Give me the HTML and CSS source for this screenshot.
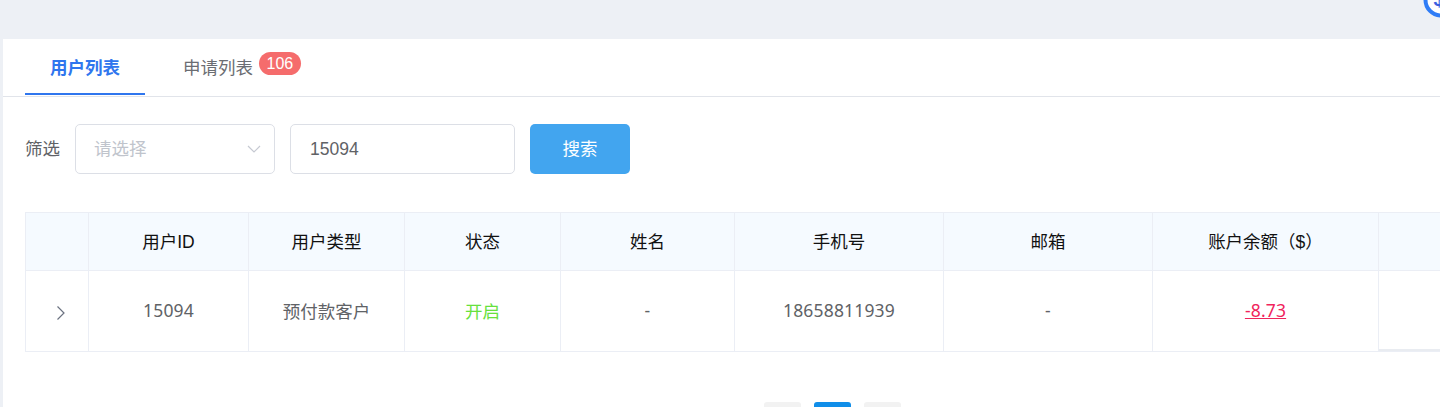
FILE: index.html
```html
<!DOCTYPE html>
<html lang="zh-CN">
<head>
<meta charset="utf-8">
<title>用户列表</title>
<link rel="stylesheet" href="styles.css">
</head>
<body>
<header class="topbar">
  <svg class="coin" width="36" height="36" viewBox="0 0 36 36" aria-hidden="true"><circle cx="18" cy="18" r="15.5" fill="#fff" stroke="#2f7cf6" stroke-width="4"/><text x="16" y="24" text-anchor="middle" class="coin-text">$</text></svg>
</header>
<main class="card">
  <nav class="tabs">
    <a class="tab tab-active">用户列表</a>
    <a class="tab">申请列表<span class="badge">106</span></a>
  </nav>
  <form class="filters">
    <label class="filter-label">筛选</label>
    <div class="select">
      <span class="placeholder">请选择</span>
      <svg class="chevron" width="14" height="8" viewBox="0 0 14 8" aria-hidden="true"><path d="M1 1l6 6 6-6" fill="none" stroke="#c6c9d2" stroke-width="1.2"/></svg>
    </div>
    <div class="input">15094</div>
    <button class="search" type="button">搜索</button>
  </form>
  <div class="table-wrap">
    <table class="grid">
      <colgroup>
        <col class="c-expand"><col class="c-id"><col class="c-type"><col class="c-status"><col class="c-name"><col class="c-phone"><col class="c-mail"><col class="c-balance"><col class="c-action">
      </colgroup>
      <thead>
        <tr><th></th><th>用户ID</th><th>用户类型</th><th>状态</th><th>姓名</th><th>手机号</th><th>邮箱</th><th>账户余额（$）</th><th class="fixed-head"></th></tr>
      </thead>
      <tbody>
        <tr>
          <td><svg class="expand" width="10" height="16" viewBox="0 0 10 16" aria-hidden="true"><path d="M1.500 1.500L8 8l-6.500 6.500" fill="none" stroke="#6b7280" stroke-width="1.200"/></svg></td>
          <td class="num">15094</td><td>预付款客户</td><td class="on">开启</td><td class="num">-</td><td class="num">18658811939</td><td class="num">-</td><td class="num"><a class="debt">-8.73</a></td><td class="fixed-cell"></td>
        </tr>
      </tbody>
    </table>
  </div>
  <div class="pager">
    <span class="page"></span><span class="page page-current"></span><span class="page"></span>
  </div>
</main>
</body>
</html>
```
FILE: styles.css
```css
* { box-sizing: border-box; }
html, body { margin: 0; height: 407px; overflow: hidden; }
body {
  background: #edf0f5;
  color: #606266;
  font-family: "Liberation Sans", "Noto Sans CJK SC", sans-serif;
  font-size: 17.5px;
  position: relative;
}
.topbar { height: 39px; }
.coin { position: absolute; right: -19px; top: -18px; }
.coin-text { font: bold 20px "Liberation Sans", sans-serif; fill: #3a5fe0; }
.card { margin-left: 3px; height: 368px; background: #fff; overflow: hidden; }
.tabs { display: flex; height: 58px; padding-left: 22px; border-bottom: 1px solid #e1e4ea; }
.tab {
  width: 120px; height: 56px; line-height: 58px; text-align: center;
  color: #6b6d72; position: relative; margin-right: 13px;
  border-bottom: 2px solid transparent;
}
.tab-active { color: #2f76ee; font-weight: 700; border-bottom-color: #2f76ee; }
.badge {
  position: absolute; left: 101px; top: 13px;
  height: 23px; line-height: 23px; padding: 0 7.5px;
  background: #f56c6c; color: #fff; border-radius: 12px; font-size: 16px; font-weight: 400;
}
.filters { display: flex; align-items: center; gap: 15px; padding: 27px 0 0 22px; height: 77px; }
.filter-label { width: 35px; color: #606266; line-height: 52px; }
.select, .input {
  height: 50px; border: 1px solid #dcdfe6; border-radius: 5px; background: #fff;
  display: flex; align-items: center;
}
.select { width: 200px; padding: 0 13px 0 19px; justify-content: space-between; }
.placeholder { color: #c0c4cc; padding-bottom: 3px; margin-left: -1px; }
.input { width: 225px; padding: 0 19px; color: #606266; }
.search {
  width: 100px; height: 50px; border: 0; border-radius: 5px; padding: 0 0 3px;
  background: #42a5ef; color: #fff; font: inherit;
}
.table-wrap { margin: 38px 0 0 22px; overflow: hidden; }
.grid { width: 1560px; table-layout: fixed; border-collapse: collapse; border: 1px solid #ebeef5; }
.c-expand { width: 63px; } .c-id { width: 160px; } .c-type { width: 156px; } .c-status { width: 156px; }
.c-name { width: 174px; } .c-phone { width: 209px; } .c-mail { width: 209px; } .c-balance { width: 226px; }
.c-action { width: 207px; }
.grid th, .grid td { border: 1px solid #ebeef5; text-align: center; padding: 0 0 2px; }
.grid th { height: 58px; background: #f5faff; color: #111; font-weight: 400; }
.grid td { height: 81px; color: #606266; }
.grid .num { font-family: "Noto Sans", "Noto Sans CJK SC", sans-serif; letter-spacing: .17px; }
.grid .on { color: #67e13c; }
.debt { color: #f0245c; text-decoration: underline; }
.expand { display: block; margin: 5px 0 0 30px; }
.fixed-cell { box-shadow: inset 0 -2px 0 #e9ecf1; }
.pager { display: flex; gap: 13px; margin: 50px 0 0 761px; }
.page { width: 37px; height: 36px; border-radius: 3px; background: #f2f2f2; }
.page-current { background: #108ee9; }
```
